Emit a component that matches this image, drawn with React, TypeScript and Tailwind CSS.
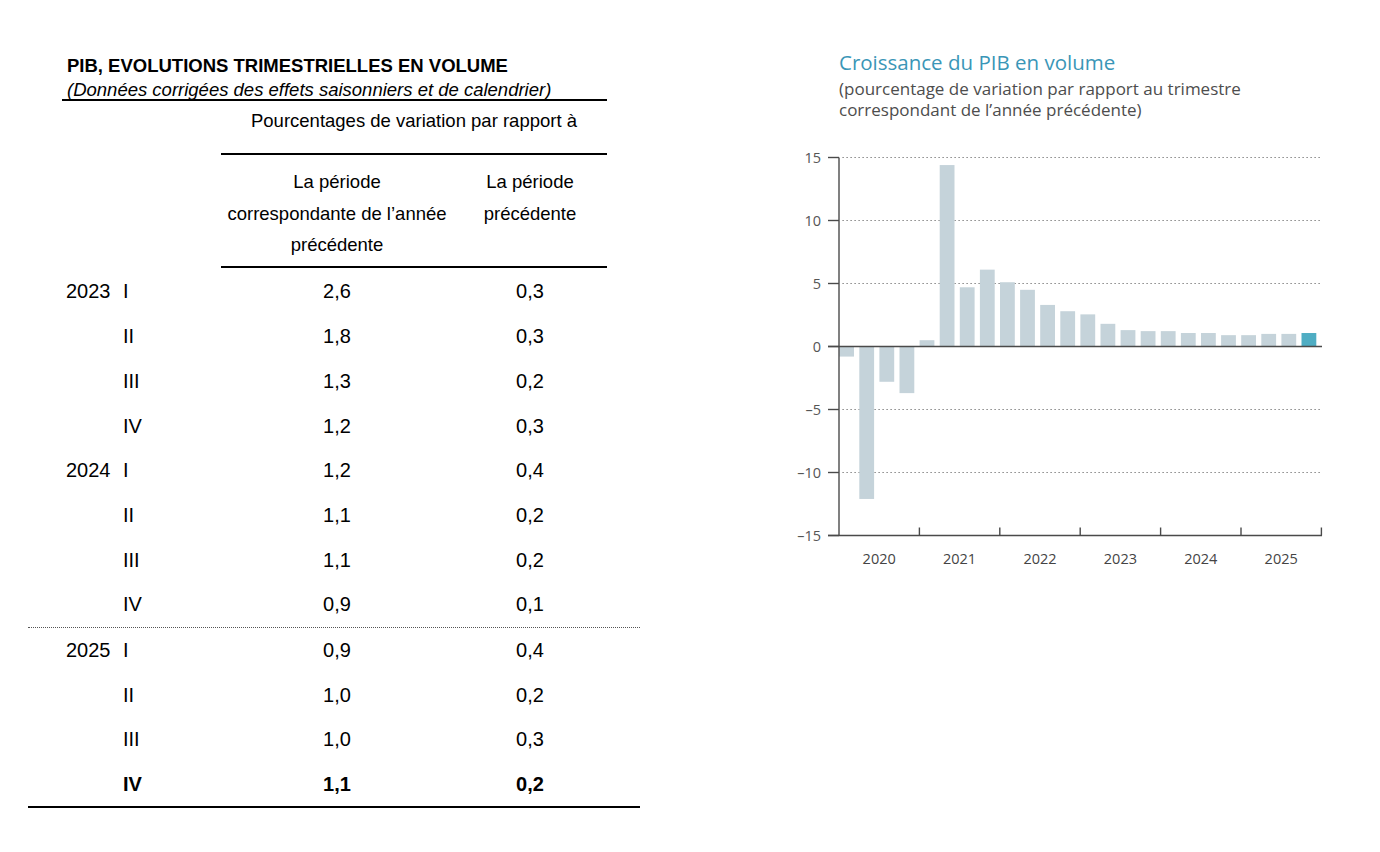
import React from "react";

const rows = [
  { y: "2023", q: "I", a: "2,6", b: "0,3" },
  { y: "", q: "II", a: "1,8", b: "0,3" },
  { y: "", q: "III", a: "1,3", b: "0,2" },
  { y: "", q: "IV", a: "1,2", b: "0,3" },
  { y: "2024", q: "I", a: "1,2", b: "0,4" },
  { y: "", q: "II", a: "1,1", b: "0,2" },
  { y: "", q: "III", a: "1,1", b: "0,2" },
  { y: "", q: "IV", a: "0,9", b: "0,1" },
];
const rows2 = [
  { y: "2025", q: "I", a: "0,9", b: "0,4" },
  { y: "", q: "II", a: "1,0", b: "0,2" },
  { y: "", q: "III", a: "1,0", b: "0,3" },
];

const vals = [
  -0.8, -12.1, -2.8, -3.7, 0.5, 14.4, 4.7, 6.1, 5.1, 4.5, 3.3, 2.8, 2.55, 1.8, 1.3, 1.22, 1.22, 1.07, 1.07,
  0.9, 0.9, 1.0, 1.0, 1.07,
];

function Row({ r, bold }: { r: { y: string; q: string; a: string; b: string }; bold?: boolean }) {
  return (
    <div className={`flex items-center h-[44.7px] text-[20px] leading-[24px] ${bold ? "font-bold" : ""}`}>
      <div className="w-[95px] pl-[38px]">{r.y}</div>
      <div className="w-[98px]">{r.q}</div>
      <div className="w-[232px] text-center">{r.a}</div>
      <div className="w-[154px] text-center">{r.b}</div>
    </div>
  );
}

function Chart() {
  const zero = 206.5;
  const k = 12.6;
  const yOf = (v: number) => zero - v * k;
  const ticks = [15, 10, 5, 0, -5, -10, -15];
  const axis = "#4a4a4a";
  return (
    <svg width={550} height={440} viewBox="0 0 550 440" className="block">
      {[15, 10, 5, -5, -10].map((t) => (
        <line
          key={"g" + t}
          x1={52.5}
          x2={532}
          y1={yOf(t)}
          y2={yOf(t)}
          stroke="#6b6b6b"
          strokeWidth={1.2}
          strokeDasharray="1.2 2.8"
        />
      ))}
      {vals.map((v, i) => {
        const x = 49.2 + i * 20.1;
        const y = v >= 0 ? yOf(v) : zero;
        const h = Math.abs(v) * k;
        return (
          <rect key={i} x={x} y={y} width={14.8} height={h} fill={i === vals.length - 1 ? "#4fadc3" : "#c5d3da"} />
        );
      })}
      <line x1={49} x2={49} y1={yOf(15)} y2={yOf(-15)} stroke={axis} strokeWidth={1.4} />
      {ticks.map((t) => (
        <g key={"t" + t}>
          <line x1={38} x2={49} y1={yOf(t)} y2={yOf(t)} stroke={axis} strokeWidth={1.4} />
          <text
            x={31}
            y={yOf(t) + 5}
            textAnchor="end"
            fontSize={14.5}
            fill="#555"
            fontFamily="'Open Sans', 'Noto Sans', sans-serif"
          >
            {t < 0 ? "\u2013" + Math.abs(t) : String(t)}
          </text>
        </g>
      ))}
      <line x1={38} x2={532} y1={zero} y2={zero} stroke={axis} strokeWidth={1.6} />
      <line x1={38} x2={532} y1={yOf(-15)} y2={yOf(-15)} stroke={axis} strokeWidth={1.4} />
      {[1, 2, 3, 4, 5, 6].map((j) => (
        <line
          key={"yt" + j}
          x1={49 + j * 80.4}
          x2={49 + j * 80.4}
          y1={yOf(-15) - 8}
          y2={yOf(-15)}
          stroke={axis}
          strokeWidth={1.4}
        />
      ))}
      {["2020", "2021", "2022", "2023", "2024", "2025"].map((yr, j) => (
        <text
          key={yr}
          x={89.2 + j * 80.4}
          y={423.5}
          textAnchor="middle"
          fontSize={14.5}
          fill="#444"
          fontFamily="'Open Sans', 'Noto Sans', sans-serif"
        >
          {yr}
        </text>
      ))}
    </svg>
  );
}

export default function App() {
  return (
    <div className="w-[1380px] h-[852px] bg-white flex text-black overflow-hidden">
      <div className="ml-[28px] w-[612px] font-['Liberation_Sans',Arial,sans-serif]">
        <div className="pl-[39px] pt-[57px]">
          <div className="text-[18.5px] leading-[18px] font-bold whitespace-nowrap">
            PIB, EVOLUTIONS TRIMESTRIELLES EN VOLUME
          </div>
          <div className="text-[18.5px] leading-[18px] italic mt-[6px] whitespace-nowrap">
            (Données corrigées des effets saisonniers et de calendrier)
          </div>
        </div>
        <div className="ml-[34px] w-[545px] h-[2px] bg-black" />
        <div className="ml-[193px] w-[386px]">
          <div className="mt-[10px] text-[18.5px] leading-[20px] text-center whitespace-nowrap">
            Pourcentages de variation par rapport à
          </div>
          <div className="mt-[22px] h-[2px] bg-black" />
          <div className="mt-[11px] flex text-[18.5px] leading-[31.5px]">
            <div className="w-[232px] text-center whitespace-nowrap">
              La période
              <br />
              correspondante de l’année
              <br />
              précédente
            </div>
            <div className="w-[154px] text-center whitespace-nowrap">
              La période
              <br />
              précédente
            </div>
          </div>
          <div className="mt-[5px] h-[2px] bg-black" />
        </div>
        <div className="mt-[1.6px]">
          {rows.map((r, i) => (
            <Row key={i} r={r} />
          ))}
          <div className="h-0 border-t border-dotted border-[#555]" />
          {rows2.map((r, i) => (
            <Row key={i} r={r} />
          ))}
          <Row r={{ y: "", q: "IV", a: "1,1", b: "0,2" }} bold />
          <div className="h-[2px] bg-black" />
        </div>
      </div>
      <div className="ml-[150px] flex flex-col font-['Open_Sans','Noto_Sans',sans-serif]">
        <div className="pl-[49px] pt-[50px] text-[20.5px] leading-[24px] text-[#3a96b7] whitespace-nowrap">
          Croissance du PIB en volume
        </div>
        <div className="pl-[49px] mt-[3.5px] text-[17px] leading-[21px] text-[#4d4d4d] whitespace-nowrap">
          (pourcentage de variation par rapport au trimestre
          <br />
          correspondant de l’année précédente)
        </div>
        <div className="mt-[20.5px]">
          <Chart />
        </div>
      </div>
    </div>
  );
}
